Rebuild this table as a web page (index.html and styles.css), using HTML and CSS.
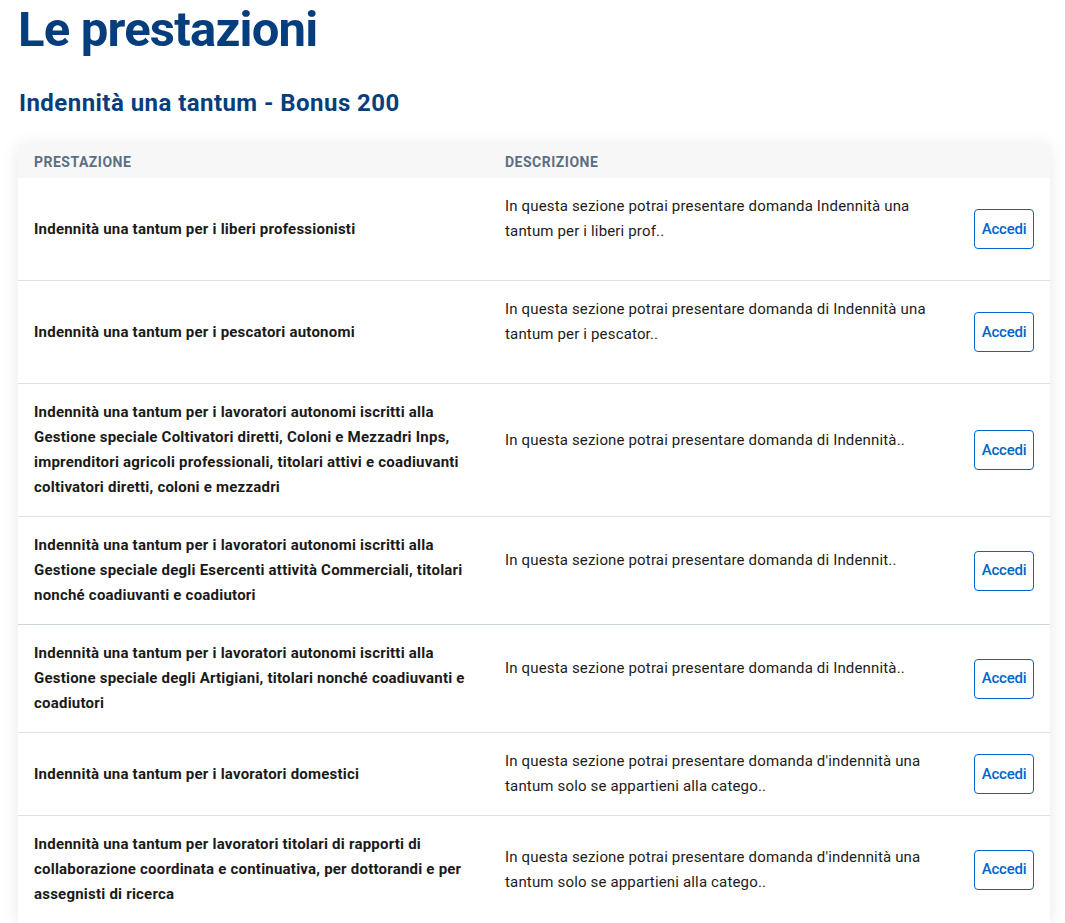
FILE: index.html
```html
<!DOCTYPE html>
<html lang="it">
<head>
<meta charset="utf-8">
<title>Le prestazioni</title>
<link rel="stylesheet" href="styles.css">
</head>
<body>
<main class="page">
  <h1 class="page-title">Le prestazioni</h1>
  <h2 class="section-title">Indennità una tantum - Bonus 200</h2>
  <div class="card">
    <table class="services">
      <colgroup>
        <col class="col-name">
        <col class="col-desc">
        <col class="col-action">
      </colgroup>
      <thead>
        <tr><th>Prestazione</th><th>Descrizione</th><th></th></tr>
      </thead>
      <tbody>
        <tr>
          <td class="name">Indennità una tantum per i liberi professionisti</td>
          <td class="desc"><span class="desc-text gap">In questa sezione potrai presentare domanda Indennità una tantum per i liberi prof..</span></td>
          <td class="action"><a class="btn" href="#">Accedi</a></td>
        </tr>
        <tr>
          <td class="name">Indennità una tantum per i pescatori autonomi</td>
          <td class="desc"><span class="desc-text gap">In questa sezione potrai presentare domanda di Indennità una tantum per i pescator..</span></td>
          <td class="action"><a class="btn" href="#">Accedi</a></td>
        </tr>
        <tr>
          <td class="name">Indennità una tantum per i lavoratori autonomi iscritti alla Gestione speciale Coltivatori diretti, Coloni e Mezzadri Inps, imprenditori agricoli professionali, titolari attivi e coadiuvanti coltivatori diretti, coloni e mezzadri</td>
          <td class="desc"><span class="desc-text gap">In questa sezione potrai presentare domanda di Indennità..</span></td>
          <td class="action"><a class="btn" href="#">Accedi</a></td>
        </tr>
        <tr class="thick">
          <td class="name">Indennità una tantum per i lavoratori autonomi iscritti alla Gestione speciale degli Esercenti attività Commerciali, titolari nonché coadiuvanti e coadiutori</td>
          <td class="desc"><span class="desc-text gap">In questa sezione potrai presentare domanda di Indennit..</span></td>
          <td class="action"><a class="btn" href="#">Accedi</a></td>
        </tr>
        <tr>
          <td class="name">Indennità una tantum per i lavoratori autonomi iscritti alla Gestione speciale degli Artigiani, titolari nonché coadiuvanti e coadiutori</td>
          <td class="desc"><span class="desc-text gap">In questa sezione potrai presentare domanda di Indennità..</span></td>
          <td class="action"><a class="btn" href="#">Accedi</a></td>
        </tr>
        <tr>
          <td class="name">Indennità una tantum per i lavoratori domestici</td>
          <td class="desc"><span class="desc-text">In questa sezione potrai presentare domanda d'indennità una tantum solo se appartieni alla catego..</span></td>
          <td class="action"><a class="btn" href="#">Accedi</a></td>
        </tr>
        <tr>
          <td class="name">Indennità una tantum per lavoratori titolari di rapporti di collaborazione coordinata e continuativa, per dottorandi e per assegnisti di ricerca</td>
          <td class="desc"><span class="desc-text">In questa sezione potrai presentare domanda d'indennità una tantum solo se appartieni alla catego..</span></td>
          <td class="action"><a class="btn" href="#">Accedi</a></td>
        </tr>
      </tbody>
    </table>
  </div>
</main>
</body>
</html>
```

FILE: styles.css
```css
html, body {
  margin: 0;
  padding: 0;
  background: #ffffff;
}

body {
  font-family: Roboto, "Noto Sans", "Liberation Sans", sans-serif;
  color: #1a1a1a;
}

.page {
  padding: 1px 15px 0 18px;
}

.page-title {
  margin: 0;
  font-size: 49px;
  line-height: 58px;
  font-weight: 700;
  color: #063e7d;
  letter-spacing: -0.8px;
}

.section-title {
  margin: 29px 0 26px 1px;
  font-size: 24px;
  line-height: 30px;
  font-weight: 700;
  color: #063e7d;
  letter-spacing: 0.45px;
}

.card {
  background: #ffffff;
  box-shadow: 0 2px 18px rgba(0, 0, 0, 0.09);
}

.services {
  width: 100%;
  border-collapse: collapse;
  table-layout: fixed;
}

.col-name { width: 471px; }
.col-desc { width: 469px; }
.col-action { width: 92px; }

.services thead th {
  background: #f7f7f7;
  text-align: left;
  font-size: 14px;
  line-height: 20px;
  font-weight: 700;
  color: #5c6f82;
  text-transform: uppercase;
  padding: 8px 16px 6px 16px;
  letter-spacing: 0.5px;
}

.services tbody td {
  padding: 16px;
  vertical-align: middle;
  border-bottom: 1px solid #dbe1e7;
  font-size: 15px;
  line-height: 25px;
}

.services tbody tr.thick td {
  border-bottom-color: #ccd4dc;
}

.services tbody tr:last-child td {
  border-bottom: none;
}

.name {
  font-weight: 700;
  color: #1a1a1a;
  letter-spacing: 0.22px;
}

.desc {
  color: #1c1c1c;
  letter-spacing: 0.16px;
}

.desc-text {
  display: block;
}

.desc-text.gap {
  padding-bottom: 20px;
}

.action {
  text-align: right;
}

.btn {
  display: inline-flex;
  align-items: center;
  justify-content: center;
  box-sizing: border-box;
  width: 60px;
  height: 40px;
  border: 1px solid #0066cc;
  border-radius: 4px;
  color: #0066cc;
  font-size: 15px;
  font-weight: 500;
  text-decoration: none;
  letter-spacing: -0.2px;
  vertical-align: middle;
}
```
